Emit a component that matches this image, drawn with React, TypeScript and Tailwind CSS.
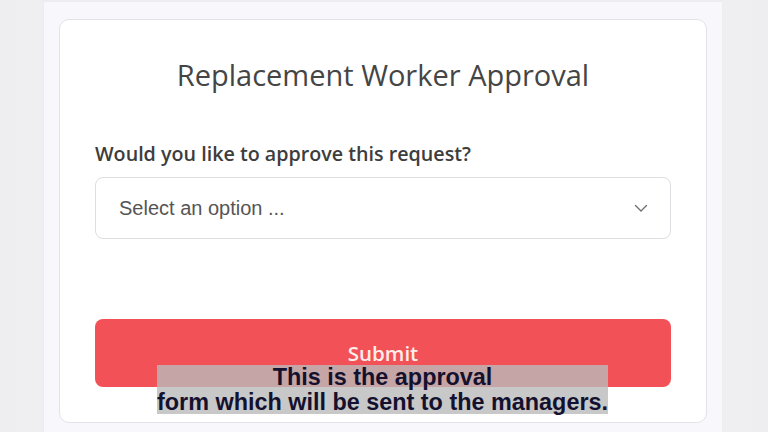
import React from 'react';

export default function App() {
  return (
    <div className="relative flex h-[432px] w-[768px] justify-center overflow-hidden bg-gradient-to-r from-[#eeeef1] via-[#f7f7fa] to-[#eeeef1] font-['Open_Sans','Noto_Sans',sans-serif]">
      {/* page panel */}
      <div className="ml-[-2px] h-full w-[680px] border-x border-t-2 border-[#ececf1] bg-[#f8f8fc] px-[15px] pt-[17px]">
        <div className="flex h-[404px] flex-col rounded-[10px] border border-[#e2e2e8] bg-white px-[35px]">
          <h1 className="mt-[36px] text-center text-[29px] leading-[38px] text-[#454545]">
            Replacement Worker Approval
          </h1>

          <label className="mt-[46px] text-[19.7px] font-semibold leading-[28px] text-[#3d3d3d]">
            Would you like to approve this request?
          </label>

          <div className="mt-[9px] flex h-[62px] items-center justify-between rounded-[8px] border border-[#dedee2] pl-[23px] pr-[22px]">
            <span className="font-['Liberation_Sans',Arial,sans-serif] text-[20px] text-[#555555]">
              Select an option ...
            </span>
            <svg width="14" height="9" viewBox="0 0 14 9" fill="none">
              <path d="M1.5 1.5 7 7l5.5-5.5" stroke="#707070" strokeWidth="1.4" strokeLinecap="round" strokeLinejoin="round" />
            </svg>
          </div>

          <button className="mt-[80px] flex h-[68px] w-full justify-center rounded-[8px] bg-[#f25157] pt-[20px] text-[20.5px] font-semibold leading-[28px] text-[#fdeeea]">
            Submit
          </button>
        </div>
      </div>

      {/* caption overlay */}
      <div className="absolute left-[157px] top-[365px] w-[451px] bg-[rgba(186,186,186,0.8)] text-center font-['Liberation_Sans',Arial,sans-serif] text-[23.4px] font-bold leading-[24.5px] text-[#14112e]">
        This is the approval
        <br />
        form which will be sent to the managers.
      </div>
    </div>
  );
}
